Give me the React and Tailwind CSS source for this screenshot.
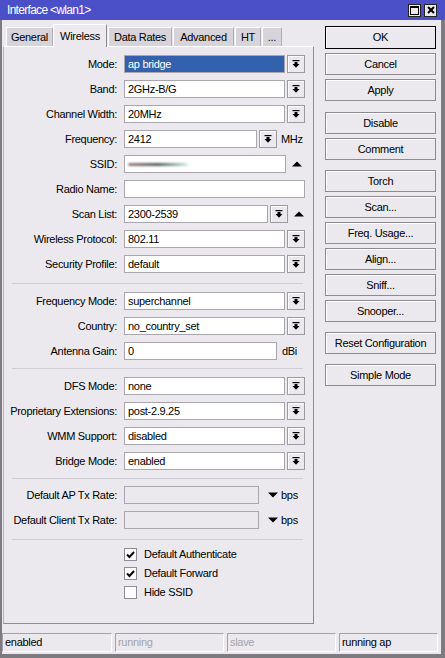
import React from "react";

function DropIcon() {
  return (
    <svg width="8" height="8" viewBox="0 0 8 8">
      <rect x="0.5" y="0" width="7" height="1.2" fill="#000" />
      <rect x="2.5" y="2" width="3" height="2" fill="#000" />
      <path d="M0.5 4H7.5L4 7.8Z" fill="#000" />
    </svg>
  );
}

function DropBtn() {
  return (
    <div className="ml-[2px] w-[18px] h-[18px] border border-[#9c9aa0] bg-[#ebe9ee] shadow-[inset_1px_1px_0_#fff] flex items-center justify-center">
      <DropIcon />
    </div>
  );
}

function UpArrow() {
  return (
    <svg width="10" height="6" viewBox="0 0 10 6" className="ml-[6px]">
      <path d="M0 5.5H10L5 0.5Z" fill="#000" />
    </svg>
  );
}

function Input({ w, children, disabled, selected }) {
  let cls = "bg-white";
  if (disabled) cls = "bg-[#ebe9ee]";
  if (selected) cls = "bg-[#3461ae] text-white";
  return (
    <div
      className={`h-[18px] border border-[#a9a7ad] px-[3px] flex items-center whitespace-nowrap overflow-hidden ${cls}`}
      style={{ width: w }}
    >
      {children}
    </div>
  );
}

function Row({ label, children, className = "" }) {
  return (
    <div className={`flex items-center h-[18px] ${className}`}>
      <div className="w-[113px] text-right whitespace-nowrap">{label}</div>
      <div className="ml-[7px] flex items-center h-full">{children}</div>
    </div>
  );
}

function Sep({ className = "" }) {
  return <div className={`ml-[8px] mr-[10px] h-px bg-[#cfcdd4] ${className}`} />;
}

function Check({ checked, label }) {
  return (
    <div className="h-[19px] flex items-center ml-[120px]">
      <div className="w-[13px] h-[13px] border border-[#8f8d93] bg-white flex items-center justify-center">
        {checked && (
          <svg width="9" height="8" viewBox="0 0 9 8">
            <path d="M1 3.5L3.5 6L8 1" stroke="#000" strokeWidth="2" fill="none" />
          </svg>
        )}
      </div>
      <span className="ml-[7px]">{label}</span>
    </div>
  );
}

function Btn({ children, ok, className = "" }) {
  return (
    <div
      className={`w-[111px] ${ok ? "h-[23px] border-black" : "h-[22px] border-[#8d8b91]"} border bg-[#ebe9ee] shadow-[inset_1px_1px_0_#fff] flex items-center justify-center ${className}`}
    >
      {children}
    </div>
  );
}

function Tab({ children, w, active }) {
  if (active) {
    return (
      <div
        className="relative z-10 -mb-px h-[23px] bg-[#ebe9ee] border-t border-l border-white border-r border-r-[#8d8b91] flex items-start justify-center pt-[3px]"
        style={{ width: w }}
      >
        {children}
      </div>
    );
  }
  return (
    <div
      className="h-[19px] bg-[#d6d3da] border-t border-l border-white border-r border-r-[#b0aeb4] flex items-center justify-center ml-px"
      style={{ width: w }}
    >
      {children}
    </div>
  );
}

function Field({ children, w, dim }) {
  return (
    <div
      className={`h-[19px] border border-t-[#a3a1a7] border-l-[#a3a1a7] border-b-white border-r-white px-[2px] flex items-center ${dim ? "text-[#a5a3a9]" : "text-black"} ${w ? "" : "flex-1"}`}
      style={w ? { width: w } : undefined}
    >
      {children}
    </div>
  );
}

export default function App() {
  return (
    <div className="w-[445px] h-[658px] flex flex-col bg-[#ebe9ee] text-[11px] tracking-[-0.3px] text-black font-['Liberation_Sans',Arial,sans-serif] overflow-hidden">
      {/* title bar */}
      <div className="h-[20px] bg-[#4b4fc8] flex items-center pl-[7px] pr-[8px]">
        <span className="text-white text-[12px] tracking-[-0.7px]">Interface &lt;wlan1&gt;</span>
        <div className="ml-auto flex items-center gap-[3px]">
          <div className="w-[13px] h-[13px] bg-[#ebe9ee] border border-[#222] flex items-center justify-center">
            <svg width="9" height="9" viewBox="0 0 9 9">
              <rect x="0.5" y="0.5" width="8" height="8" fill="none" stroke="#000" strokeWidth="1" />
              <rect x="0" y="0" width="9" height="2" fill="#000" />
            </svg>
          </div>
          <div className="w-[13px] h-[13px] bg-[#ebe9ee] border border-[#222] flex items-center justify-center">
            <svg width="8" height="8" viewBox="0 0 8 8">
              <path d="M1 1L7 7M7 1L1 7" stroke="#000" strokeWidth="2" />
            </svg>
          </div>
        </div>
      </div>

      <div className="flex-1 flex flex-col border-l-2 border-r-4 border-b-4 border-[#7d7b80]">
        <div className="flex items-start">
          {/* left column */}
          <div className="ml-px w-[311px] pt-[4px]">
            <div className="flex items-end h-[22px] pl-[2px]">
              <Tab w={47}>General</Tab>
              <Tab w={54} active>Wireless</Tab>
              <Tab w={64}>Data Rates</Tab>
              <Tab w={61}>Advanced</Tab>
              <Tab w={26}>HT</Tab>
              <Tab w={20}>...</Tab>
            </div>
            <div className="h-[578px] border border-t-white border-l-[#b5b3b9] border-r-[#8d8b91] border-b-[#8d8b91] pt-[8px]">
              <Row label="Mode:">
                <Input w={161} selected>ap bridge</Input>
                <DropBtn />
              </Row>
              <Row label="Band:" className="mt-[7px]">
                <Input w={161}>2GHz-B/G</Input>
                <DropBtn />
              </Row>
              <Row label="Channel Width:" className="mt-[7px]">
                <Input w={161}>20MHz</Input>
                <DropBtn />
              </Row>
              <Row label="Frequency:" className="mt-[7px]">
                <Input w={133}>2412</Input>
                <DropBtn />
                <span className="ml-[4px]">MHz</span>
              </Row>
              <Row label="SSID:" className="mt-[7px]">
                <Input w={162}>
                  <div className="w-[60px] h-[3px] bg-gradient-to-r from-[#9a8080] via-[#55605f] to-[#d5ece8] blur-[1px] rounded-full" />
                </Input>
                <UpArrow />
              </Row>
              <Row label="Radio Name:" className="mt-[7px]">
                <Input w={181}></Input>
              </Row>
              <Row label="Scan List:" className="mt-[7px]">
                <Input w={144}>2300-2539</Input>
                <DropBtn />
                <UpArrow />
              </Row>
              <Row label="Wireless Protocol:" className="mt-[7px]">
                <Input w={161}>802.11</Input>
                <DropBtn />
              </Row>
              <Row label="Security Profile:" className="mt-[7px]">
                <Input w={161}>default</Input>
                <DropBtn />
              </Row>

              <Sep className="mt-[10px]" />

              <Row label="Frequency Mode:" className="mt-[8px]">
                <Input w={161}>superchannel</Input>
                <DropBtn />
              </Row>
              <Row label="Country:" className="mt-[7px]">
                <Input w={161}>no_country_set</Input>
                <DropBtn />
              </Row>
              <Row label="Antenna Gain:" className="mt-[7px]">
                <Input w={153}>0</Input>
                <span className="ml-[5px]">dBi</span>
              </Row>

              <Sep className="mt-[8px]" />

              <Row label="DFS Mode:" className="mt-[8px]">
                <Input w={161}>none</Input>
                <DropBtn />
              </Row>
              <Row label="Proprietary Extensions:" className="mt-[7px]">
                <Input w={161}>post-2.9.25</Input>
                <DropBtn />
              </Row>
              <Row label="WMM Support:" className="mt-[7px]">
                <Input w={161}>disabled</Input>
                <DropBtn />
              </Row>
              <Row label="Bridge Mode:" className="mt-[7px]">
                <Input w={161}>enabled</Input>
                <DropBtn />
              </Row>

              <Sep className="mt-[8px]" />

              <Row label="Default AP Tx Rate:" className="mt-[7px]">
                <Input w={135} disabled></Input>
                <svg width="10" height="6" viewBox="0 0 10 6" className="ml-[9px]">
                  <path d="M0 0.5H10L5 5.5Z" fill="#000" />
                </svg>
                <span className="ml-[3px]">bps</span>
              </Row>
              <Row label="Default Client Tx Rate:" className="mt-[7px]">
                <Input w={135} disabled></Input>
                <svg width="10" height="6" viewBox="0 0 10 6" className="ml-[9px]">
                  <path d="M0 0.5H10L5 5.5Z" fill="#000" />
                </svg>
                <span className="ml-[3px]">bps</span>
              </Row>

              <Sep className="mt-[10px]" />

              <div className="mt-[5px]">
                <Check checked label="Default Authenticate" />
                <Check checked label="Default Forward" />
                <Check label="Hide SSID" />
              </div>
            </div>
          </div>

          {/* right column */}
          <div className="ml-[11px] pt-[6px] flex flex-col">
            <Btn ok>OK</Btn>
            <Btn className="mt-[4px]">Cancel</Btn>
            <Btn className="mt-[4px]">Apply</Btn>
            <Btn className="mt-[11px]">Disable</Btn>
            <Btn className="mt-[4px]">Comment</Btn>
            <Btn className="mt-[10px]">Torch</Btn>
            <Btn className="mt-[4px]">Scan...</Btn>
            <Btn className="mt-[4px]">Freq. Usage...</Btn>
            <Btn className="mt-[4px]">Align...</Btn>
            <Btn className="mt-[4px]">Sniff...</Btn>
            <Btn className="mt-[4px]">Snooper...</Btn>
            <Btn className="mt-[10px]">Reset Configuration</Btn>
            <Btn className="mt-[10px]">Simple Mode</Btn>
          </div>
        </div>

        {/* status bar */}
        <div className="mt-[9px] flex gap-[3px] pr-[3px]">
          <Field w={110}>enabled</Field>
          <Field w={109} dim>running</Field>
          <Field w={109} dim>slave</Field>
          <Field>running ap</Field>
        </div>
      </div>
    </div>
  );
}
